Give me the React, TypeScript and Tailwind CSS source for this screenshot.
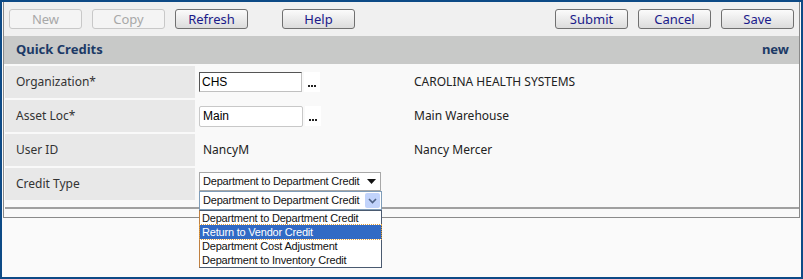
const Btn = ({ label, disabled }: { label: string; disabled?: boolean }) => (
  <button
    className={
      "h-[20px] w-[73px] rounded-[3px] border text-[13px] leading-none " +
      (disabled
        ? "border-[#c8c8c8] bg-[#f4f4f4] text-[#a8a8a8]"
        : "border-[#707070] bg-gradient-to-b from-[#fbfbfb] to-[#dcdcdc] text-[#1a1a8a]")
    }
  >
    {label}
  </button>
);

const Dots = () => (
  <div className="ml-[2px] flex h-[20px] w-[16px] items-end justify-center bg-white pb-[5px]">
    <div className="flex gap-[1px]">
      <span className="h-[2px] w-[2px] bg-[#222]" />
      <span className="h-[2px] w-[2px] bg-[#222]" />
      <span className="h-[2px] w-[2px] bg-[#222]" />
    </div>
  </div>
);

const Row = ({
  label,
  children,
  desc,
  top,
}: {
  label: string;
  children: React.ReactNode;
  desc?: string;
  top?: boolean;
}) => (
  <div className="flex h-[32px]">
    <div className="flex w-[190px] items-center bg-[#e8e8e8] pl-[11px] text-[12px] text-[#333]">{label}</div>
    <div className={"flex w-[219px] pl-[4px] " + (top ? "items-start pt-[4px]" : "items-center")}>{children}</div>
    <div className="flex items-center text-[12px] text-[#222]">{desc}</div>
  </div>
);

const options = [
  "Department to Department Credit",
  "Return to Vendor Credit",
  "Department Cost Adjustment",
  "Department to Inventory Credit",
];

export default function App() {
  return (
    <div
      className="relative h-[279px] w-[803px] border-2 border-[#0d4a86] bg-[#fafafa]"
      style={{ fontFamily: "'Noto Sans', 'DejaVu Sans', sans-serif" }}
    >
      <div className="mx-[1px] border-x border-b border-[#8a8a8a]">
        <div className="flex h-[34px] items-start bg-[#f0f0f0] pl-[5px] pr-[5px] pt-[7px]">
          <div className="flex gap-[10px]">
            <Btn label="New" disabled />
            <Btn label="Copy" disabled />
            <Btn label="Refresh" />
          </div>
          <div className="ml-[34px] flex">
            <Btn label="Help" />
          </div>
          <div className="ml-auto flex gap-[10px]">
            <Btn label="Submit" />
            <Btn label="Cancel" />
            <Btn label="Save" />
          </div>
        </div>
        <div className="flex h-[28px] items-center justify-between bg-[#c8c9c8] pl-[12px] pr-[10px] text-[13px] font-bold text-[#1c3a66]">
          <span>Quick Credits</span>
          <span>new</span>
        </div>
        <div className="flex flex-col gap-[2px] bg-[#f9f9f9] pl-[1px] pt-[2px] text-[12px]">
          <Row label="Organization*" desc="CAROLINA HEALTH SYSTEMS">
            <div className="flex items-center">
              <div className="flex h-[20px] w-[103px] items-center border border-[#c0c0c0] border-l-[#555] border-t-[#555] bg-white pl-[2px] text-[12px] [font-family:'Liberation_Sans',sans-serif]">
                CHS
              </div>
              <Dots />
            </div>
          </Row>
          <Row label="Asset Loc*" desc="Main Warehouse">
            <div className="flex items-center">
              <div className="flex h-[21px] w-[104px] items-center rounded-[2px] border border-[#c8c8c8] bg-white pl-[3px] text-[12px] [font-family:'Liberation_Sans',sans-serif]">
                Main
              </div>
              <Dots />
            </div>
          </Row>
          <Row label="User ID" desc="Nancy Mercer">
            <span className="pl-[4px] text-[#222]">NancyM</span>
          </Row>
          <Row label="Credit Type" top>
            <div className="flex h-[19px] w-[182px] items-center justify-between whitespace-nowrap border border-[#a8a8a8] bg-white pl-[3px] pr-[4px] text-[11px] tracking-[-0.2px] text-[#111] [font-family:'Liberation_Sans',sans-serif]">
              <span>Department to Department Credit</span>
              <svg width="9" height="5" viewBox="0 0 9 5">
                <path d="M0 0h9L4.5 5z" fill="#111" />
              </svg>
            </div>
          </Row>
          <div className="h-[3px]" />
          <div className="h-[2px] bg-[#a0a0a0]" />
          <div className="h-[6px]" />
        </div>
      </div>

      <div className="absolute left-[197px] top-[189px] w-[183px] whitespace-nowrap text-[11px] tracking-[-0.2px] [font-family:'Liberation_Sans',sans-serif]">
        <div className="flex h-[19px] items-center justify-between border border-[#7f9db9] bg-white pl-[3px] pr-[1px] text-[#111]">
          <span>Department to Department Credit</span>
          <div className="flex h-[15px] w-[15px] items-center justify-center rounded-[2px] bg-[#c1d3fb]">
            <svg width="9" height="6" viewBox="0 0 9 6">
              <path d="M1 1l3.5 3.5L8 1" stroke="#4d6185" strokeWidth="1.6" fill="none" />
            </svg>
          </div>
        </div>
        <div className="border border-[#4a5a70] border-l-[#c08040] bg-white">
          {options.map((o, i) => (
            <div
              key={o}
              className={
                "h-[14px] pl-[2px] leading-[14px] " +
                (i === 1 ? "bg-[#316ac5] text-white outline-1 outline-dotted outline-[#e0a040]" : "text-[#111]")
              }
            >
              {o}
            </div>
          ))}
        </div>
      </div>
    </div>
  );
}
